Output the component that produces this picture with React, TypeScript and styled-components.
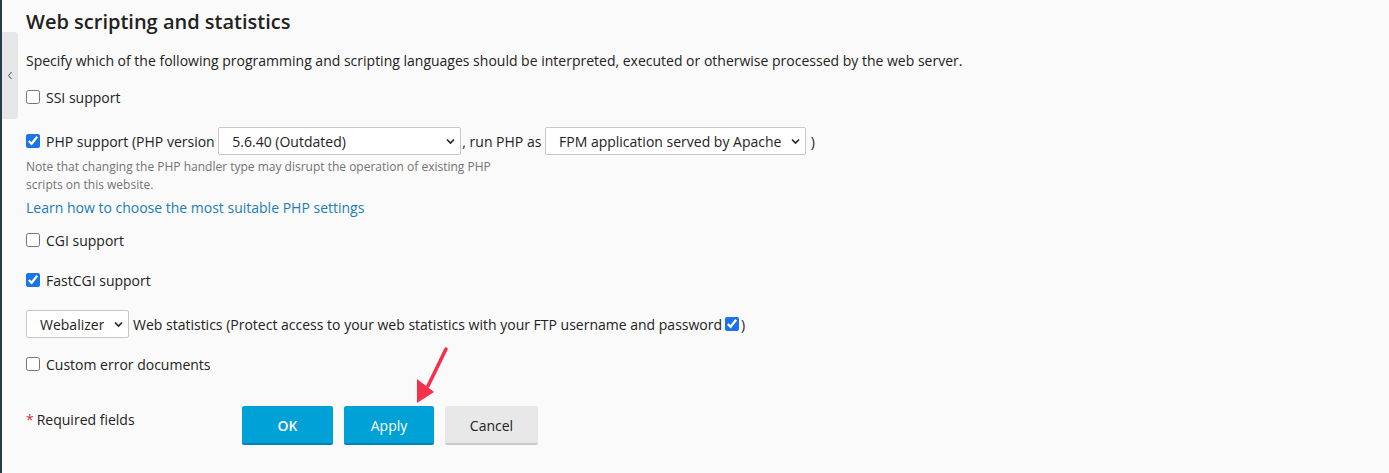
import styled, { createGlobalStyle } from "styled-components"

const GlobalStyle = createGlobalStyle`
  html, body {
    margin: 0;
    padding: 0;
    background: #fafafa;
  }
  body {
    font-family: "Open Sans", "Liberation Sans", sans-serif;
    color: #222;
  }
`

const Page = styled.div`
  position: relative;
  display: flex;
  min-height: 473px;
  background: #fafafa;
  overflow: hidden;
`

const SideStrip = styled.div`
  width: 2px;
  flex-shrink: 0;
  background: #2b3a4b;
`

const CollapseTab = styled.button`
  position: absolute;
  left: 2px;
  top: 32px;
  width: 16px;
  height: 87px;
  border: none;
  padding: 0;
  background: #e6e6e6;
  border-radius: 0 4px 4px 0;
  display: flex;
  align-items: center;
  justify-content: center;
  color: #555;
  cursor: pointer;
`

const Content = styled.div`
  flex: 1;
  padding-left: 24px;
`

const Title = styled.h2`
  margin: 0;
  padding-top: 10px;
  font-size: 20px;
  line-height: 24px;
  font-weight: 600;
  color: #222;
`

const Description = styled.p`
  margin: 17px 0 0;
  font-size: 14px;
  line-height: 20px;
  color: #222;
`

const Row = styled.div<{ $mt: number; $h?: number }>`
  display: flex;
  align-items: center;
  margin-top: ${(p) => p.$mt}px;
  height: ${(p) => p.$h ?? 20}px;
  font-size: 14px;
  color: #222;
  white-space: nowrap;
`

const Check = styled.input.attrs({ type: "checkbox" })`
  width: 14px;
  height: 14px;
  margin: 0 6px 0 0;
  accent-color: #1a73e8;
`

const InlineCheck = styled(Check)`
  margin: 0 2px 0 3px;
`

const SelectWrap = styled.span<{ $w: number }>`
  position: relative;
  display: inline-flex;
  width: ${(p) => p.$w}px;
  height: 28px;
  margin: 0 ${(p) => (p.$w > 200 ? 1 : 4)}px 0 0;
`

const Select = styled.select`
  appearance: none;
  width: 100%;
  height: 100%;
  border: 1px solid #c7c7c7;
  border-radius: 2px;
  background: #fff;
  padding: 0 24px 0 13px;
  font-family: "Open Sans", "Liberation Sans", sans-serif;
  font-size: 14px;
  color: #222;
`

const Chevron = styled.svg`
  position: absolute;
  right: 6px;
  top: 11px;
  pointer-events: none;
`

const Note = styled.div`
  margin: 3px 0 0;
  width: 472px;
  font-size: 12px;
  line-height: 18px;
  color: #737373;
`

const Link = styled.a`
  display: block;
  margin-top: 4px;
  font-size: 14px;
  line-height: 20px;
  color: #1a7db6;
  text-decoration: none;
`

const Footer = styled.div`
  display: flex;
  align-items: flex-start;
  margin-top: 32px;
`

const Required = styled.div`
  width: 216px;
  padding-top: 4px;
  font-size: 14px;
  line-height: 20px;
  color: #222;
`

const Star = styled.span`
  color: #d9304c;
  margin-right: 3px;
`

const Buttons = styled.div`
  display: flex;
  gap: 11px;
`

const Button = styled.button<{ $primary?: boolean; $w: number; $bold?: boolean }>`
  width: ${(p) => p.$w}px;
  height: 39px;
  padding: 1px 0 0;
  border: none;
  border-radius: 2px;
  border-bottom: 2px solid ${(p) => (p.$primary ? "#0384b8" : "#c9c9c9")};
  background: ${(p) => (p.$primary ? "#00a1d6" : "#e8e8e8")};
  color: ${(p) => (p.$primary ? "#fff" : "#222")};
  font-family: "Open Sans", "Liberation Sans", sans-serif;
  font-size: 14px;
  font-weight: ${(p) => (p.$bold ? 600 : 400)};
  cursor: pointer;
`

const Annotation = styled.svg`
  position: absolute;
  left: 405px;
  top: 345px;
  pointer-events: none;
`

function Dropdown({ width, value }: { width: number; value: string }) {
  return (
    <SelectWrap $w={width}>
      <Select defaultValue={value}>
        <option>{value}</option>
      </Select>
      <Chevron width="9" height="7" viewBox="0 0 9 7">
        <path d="M1 1.5l3.5 3.5L8 1.5" fill="none" stroke="#222" strokeWidth="1.6" />
      </Chevron>
    </SelectWrap>
  )
}

export default function App() {
  return (
    <>
      <GlobalStyle />
      <Page>
        <SideStrip />
        <CollapseTab aria-label="Collapse">
          <svg width="6" height="9" viewBox="0 0 6 9">
            <path d="M4.5 1L1.5 4.5l3 3.5" fill="none" stroke="#444" strokeWidth="1" />
          </svg>
        </CollapseTab>
        <Content>
          <Title>Web scripting and statistics</Title>
          <Description>
            Specify which of the following programming and scripting languages should be interpreted, executed or
            otherwise processed by the web server.
          </Description>
          <Row $mt={16}>
            <Check />
            SSI support
          </Row>
          <Row $mt={20} $h={28}>
            <Check defaultChecked />
            PHP support (PHP version&nbsp;
            <Dropdown width={243} value="5.6.40 (Outdated)" />
            , run PHP as&nbsp;
            <Dropdown width={261} value="FPM application served by Apache" />
            &nbsp;)
          </Row>
          <Note>
            Note that changing the PHP handler type may disrupt the operation of existing PHP scripts on this website.
          </Note>
          <Link href="#">Learn how to choose the most suitable PHP settings</Link>
          <Row $mt={12}>
            <Check />
            CGI support
          </Row>
          <Row $mt={20}>
            <Check defaultChecked />
            FastCGI support
          </Row>
          <Row $mt={20} $h={28}>
            <Dropdown width={103} value="Webalizer" />
            Web statistics (Protect access to your web statistics with your FTP username and password
            <InlineCheck defaultChecked />)
          </Row>
          <Row $mt={16}>
            <Check />
            Custom error documents
          </Row>
          <Footer>
            <Required>
              <Star>*</Star>Required fields
            </Required>
            <Buttons>
              <Button $primary $bold $w={91}>OK</Button>
              <Button $primary $w={90}>Apply</Button>
              <Button $w={93}>Cancel</Button>
            </Buttons>
          </Footer>
        </Content>
        <Annotation width="50" height="62" viewBox="0 0 50 62">
          <path d="M41 4L23 41" stroke="#f5304a" strokeWidth="3.5" strokeLinecap="round" />
          <path d="M12 34L29 47L12 58Z" fill="#f5304a" />
        </Annotation>
      </Page>
    </>
  )
}
